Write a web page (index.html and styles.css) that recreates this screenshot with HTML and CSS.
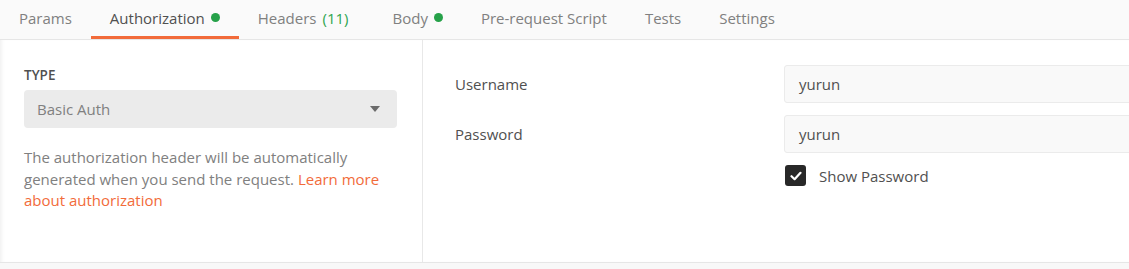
FILE: index.html
```html
<!DOCTYPE html>
<html lang="en">
<head>
  <meta charset="UTF-8">
  <title>Authorization</title>
  <link rel="stylesheet" href="styles.css">
</head>
<body>
  <nav class="tabs">
    <div class="tab">Params</div>
    <div class="tab active">Authorization <span class="dot"></span></div>
    <div class="tab">Headers <span class="count">(11)</span></div>
    <div class="tab">Body <span class="dot"></span></div>
    <div class="tab">Pre-request Script</div>
    <div class="tab">Tests</div>
    <div class="tab">Settings</div>
  </nav>

  <main class="auth">
    <section class="auth-type">
      <div class="label">TYPE</div>
      <div class="select">
        <span>Basic Auth</span>
        <span class="caret"></span>
      </div>
      <p class="help">
        The authorization header will be automatically generated when you send the request.
        <a href="#">Learn more about authorization</a>
      </p>
    </section>

    <section class="auth-fields">
      <div class="field-label">Username</div>
      <div class="input">yurun</div>
      <div class="field-label">Password</div>
      <div class="input">yurun</div>
      <div></div>
      <label class="check">
        <span class="box">
          <svg width="12" height="10" viewBox="0 0 12 10"><path d="M1.5 5.2 L4.6 8.2 L10.5 1.8" fill="none" stroke="#fff" stroke-width="2.2" stroke-linecap="round" stroke-linejoin="round"/></svg>
        </span>
        Show Password
      </label>
    </section>
  </main>

  <footer class="bottom"></footer>
</body>
</html>
```

FILE: styles.css
```css
* {
  margin: 0;
  padding: 0;
  box-sizing: border-box;
}

body {
  font-family: 'Open Sans', 'Noto Sans', sans-serif;
  width: 1129px;
  height: 269px;
  overflow: hidden;
  background: #fff;
  color: #505050;
}

.tabs {
  display: flex;
  height: 40px;
  background: #fafafa;
  border-bottom: 1px solid #e6e6e6;
}

.tab {
  display: flex;
  align-items: center;
  gap: 6px;
  padding: 1px 19px 2px;
  font-size: 15px;
  color: #808080;
  border-bottom: 4px solid transparent;
  margin-bottom: -1px;
}

.tab.active {
  color: #505050;
  border-bottom: 3px solid #f26b3a;
  margin-bottom: 0;
}

.dot {
  width: 9px;
  height: 9px;
  border-radius: 50%;
  background: #26a149;
}

.count {
  color: #2ea54f;
  margin-right: 6px;
}

.auth {
  display: flex;
  height: 222px;
  box-shadow: inset 4px 0 4px -3px rgba(0, 0, 0, 0.08);
}

.auth-type {
  width: 423px;
  padding: 27px 25px 0 24px;
  border-right: 1px solid #e8e8e8;
}

.label {
  font-size: 13.5px;
  font-weight: 600;
  color: #505050;
  line-height: 16px;
}

.select {
  margin-top: 7px;
  height: 38px;
  background: #ebebeb;
  border-radius: 4px;
  display: flex;
  align-items: center;
  justify-content: space-between;
  padding: 0 17px 0 13px;
  font-size: 15px;
  color: #808080;
}

.caret {
  width: 0;
  height: 0;
  border-left: 5px solid transparent;
  border-right: 5px solid transparent;
  border-top: 6px solid #6b6b6b;
}

.help {
  margin-top: 19px;
  font-size: 15px;
  line-height: 21.5px;
  color: #808080;
}

.help a {
  color: #f26b3a;
  text-decoration: none;
}

.auth-fields {
  flex: 1;
  display: grid;
  grid-template-columns: 329px 420px;
  grid-auto-rows: min-content;
  row-gap: 12px;
  align-items: center;
  padding: 25px 0 0 32px;
  overflow: hidden;
}

.field-label {
  font-size: 15px;
  color: #505050;
}

.input {
  height: 38px;
  display: flex;
  align-items: center;
  padding: 0 14px;
  background: #f9f9f9;
  border: 1px solid #ebebeb;
  border-radius: 3px;
  font-size: 15px;
  color: #505050;
}

.check {
  display: flex;
  align-items: center;
  gap: 13px;
  font-size: 15px;
  color: #505050;
  padding-left: 1px;
}

.box {
  width: 21px;
  height: 21px;
  border-radius: 3px;
  background: #282828;
  display: flex;
  align-items: center;
  justify-content: center;
}

.bottom {
  height: 7px;
  background: #f8f8f8;
  border-top: 1px solid #e6e6e6;
}
```
